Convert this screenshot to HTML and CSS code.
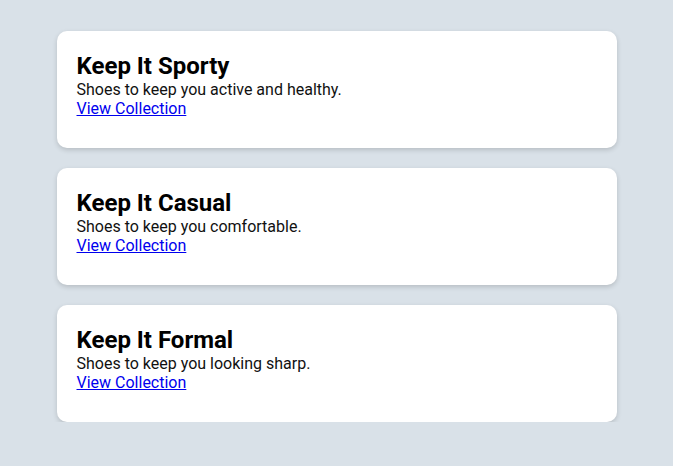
FILE: index.html
```html
<!DOCTYPE html>
<html>
<head>
<meta charset="utf-8">
<link rel="stylesheet" href="styles.css">
</head>
<body>
<main class="list">
  <section class="card">
    <h2 class="title">Keep It Sporty</h2>
    <p class="desc">Shoes to keep you active and healthy.</p>
    <a class="link" href="#">View Collection</a>
  </section>
  <section class="card">
    <h2 class="title">Keep It Casual</h2>
    <p class="desc">Shoes to keep you comfortable.</p>
    <a class="link" href="#">View Collection</a>
  </section>
  <section class="card">
    <h2 class="title">Keep It Formal</h2>
    <p class="desc">Shoes to keep you looking sharp.</p>
    <a class="link" href="#">View Collection</a>
  </section>
</main>
</body>
</html>
```
FILE: styles.css
```css
html, body {
  margin: 0;
  padding: 0;
}
body {
  background: #d9e1e8;
  font-family: Roboto, "Liberation Sans", sans-serif;
  color: #111;
  padding-top: 31px;
}
.list {
  width: 560px;
  margin: 0 auto;
  display: flex;
  flex-direction: column;
  gap: 20px;
}
.card {
  background: #fff;
  border-radius: 10px;
  box-shadow: 0 2px 5px rgba(0, 0, 0, 0.16);
  padding: 21px 20px 0;
  height: 117px;
  box-sizing: border-box;
}
.title {
  margin: 0;
  font-size: 24px;
  font-weight: 700;
  color: #000;
}
.desc {
  margin: 0;
  font-size: 16px;
}
.link {
  font-size: 16px;
  color: #0000ee;
  text-decoration: underline;
}
```
